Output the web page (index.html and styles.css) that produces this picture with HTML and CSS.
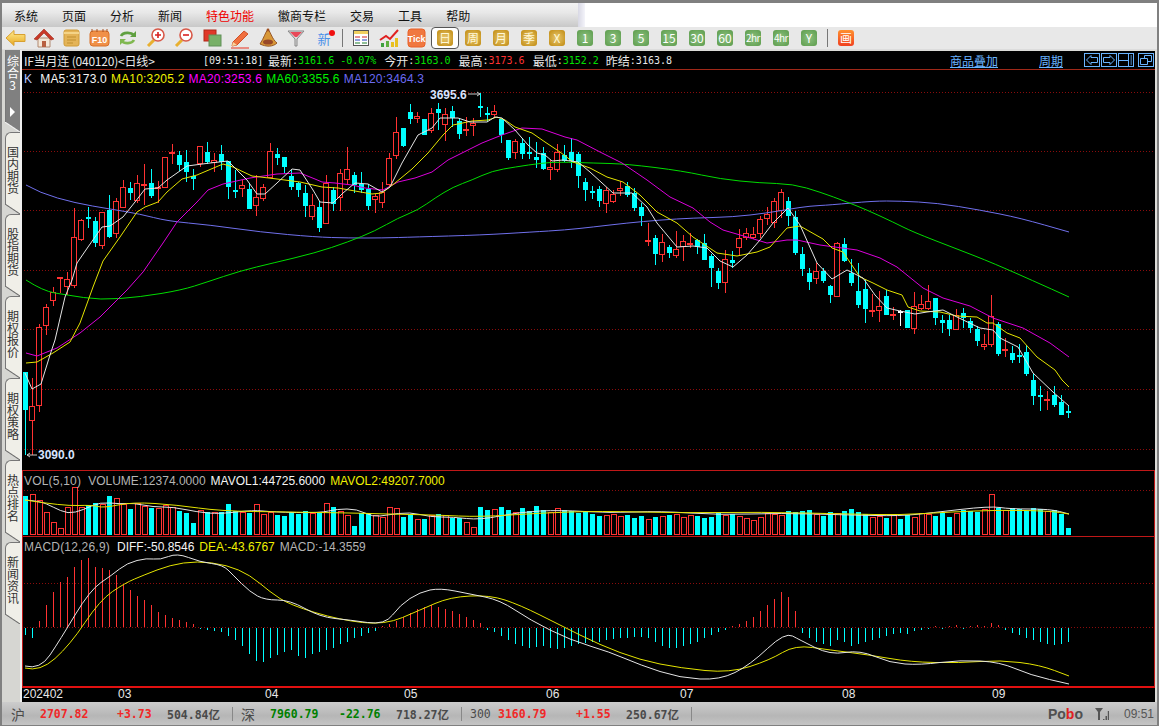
FILE: index.html
```html
<!DOCTYPE html>
<html lang="zh-CN">
<head>
    <meta charset="UTF-8">
    <title>IF当月连 日线</title>
    <link rel="stylesheet" href="styles.css">
</head>
<body>
<div class="window">
    <div class="menubar">
        <div class="menu">
            <span>系统</span><span>页面</span><span>分析</span><span>新闻</span>
            <span class="hot">特色功能</span><span>徽商专栏</span><span>交易</span><span>工具</span><span>帮助</span>
        </div>
        <div class="menu-gap"></div>
        <div class="menu-blank"></div>
    </div>

    <div class="toolbar">
        <span class="tool"><svg width="24" height="22" viewBox="0 0 24 22"><defs><linearGradient id="gold" x1="0" y1="0" x2="0" y2="1"><stop offset="0" stop-color="#ffec90"/><stop offset="1" stop-color="#e8a820"/></linearGradient></defs><path d="M2 11 10 3.500V7.500H21V14.500H10V18.500Z" fill="url(#gold)" stroke="#d8a030"/></svg></span>
        <span class="tool"><svg width="24" height="22" viewBox="0 0 24 22"><path d="M6 11H18V20H6Z" fill="#f4e8d8" stroke="#b08870"/><path d="M10 14H14V20H10Z" fill="#b86040"/><path d="M2 12 12 2 22 12 19 13 12 6 5 13Z" fill="#c83828" stroke="#a03020" stroke-width=".6"/></svg></span>
        <span class="tool"><svg width="22" height="22" viewBox="0 0 22 22"><rect x="3" y="3" width="15" height="16" rx="2" fill="#e4b458" stroke="#d09c38"/><path d="M3 5H18V7H3Z" fill="#f4d488"/><path d="M6 10H15M6 13H15M6 16H12" stroke="#c09030"/></svg></span>
        <span class="tool"><svg width="24" height="22" viewBox="0 0 24 22"><rect x="2" y="4" width="19" height="15" rx="3" fill="#f09048" stroke="#d87028"/><path d="M4 2V5M9 2V5M15 2V5M19 2V5" stroke="#a85020"/><text x="11.500" y="16" class="icon-text">F10</text></svg></span>
        <span class="tool"><svg width="22" height="22" viewBox="0 0 22 22" fill="none" stroke-width="2.600"><path d="M4 9C6 5 14 5 17 8" stroke="#60a040"/><path d="M17 13C15 17 7 17 5 14" stroke="#80b850"/><path d="M19 4V10H13Z" fill="#60a040" stroke="none"/><path d="M3 18V12H9Z" fill="#80b850" stroke="none"/></svg></span>
        <span class="tool"><svg width="22" height="22" viewBox="0 0 22 22" fill="none"><path d="M3 19 9 13" stroke="#e8b030" stroke-width="3"/><circle cx="13" cy="8" r="6" fill="#fff" stroke="#d85848" stroke-width="1.600"/><path d="M10 8H16M13 5V11" stroke="#d82020" stroke-width="1.600"/></svg></span>
        <span class="tool"><svg width="22" height="22" viewBox="0 0 22 22" fill="none"><path d="M3 19 9 13" stroke="#e8b030" stroke-width="3"/><circle cx="13" cy="8" r="6" fill="#fff" stroke="#d85848" stroke-width="1.600"/><path d="M10 8H16" stroke="#d82020" stroke-width="1.600"/></svg></span>
        <span class="tool"><svg width="22" height="22" viewBox="0 0 22 22"><rect x="3" y="3" width="12" height="11" fill="#e03828" stroke="#b02818"/><rect x="8" y="8" width="12" height="11" fill="#78b068" stroke="#609058"/></svg></span>
        <span class="tool"><svg width="22" height="22" viewBox="0 0 22 22"><path d="M4 15 15 4 19 7 8 18 3 19Z" fill="#f07040" stroke="#d05028"/><path d="M4 15 8 18 3 19Z" fill="#f8d8a0"/><path d="M2 21H20" stroke="#e85040" stroke-width="1.200"/></svg></span>
        <span class="tool"><svg width="22" height="22" viewBox="0 0 22 22"><path d="M11 2C8 6 7 11 3 17 9 20 16 20 20 16 15 12 14 6 11 2Z" fill="#d89838" stroke="#985828"/><ellipse cx="11" cy="15" rx="5" ry="2.600" fill="#984828"/><circle cx="11" cy="3" r="1.400" fill="#a05020"/></svg></span>
        <span class="tool"><svg width="22" height="22" viewBox="0 0 22 22"><path d="M3 4H19L12 12V19H10V12Z" fill="#dcdcdc" stroke="#888"/><path d="M5 5H17L12 10H10Z" fill="#e84858"/></svg></span>
        <span class="tool tool-new">新<i class="new-dot"></i></span>
        <span class="tool-sep"></span>
        <span class="tool"><svg width="22" height="22" viewBox="0 0 22 22"><rect x="3.500" y="3.500" width="15" height="15" fill="#fff" stroke="#555"/><path d="M4 4H18V7H4Z" fill="#f0d060"/><path d="M5 10H10M12 10H17" stroke="#d02020"/><path d="M5 13H10M12 13H17" stroke="#2040c0"/><path d="M5 16H10M12 16H17" stroke="#208030"/></svg></span>
        <span class="tool"><svg width="22" height="22" viewBox="0 0 22 22"><path d="M2 13 8 9 12 12 20 3" fill="none" stroke="#e02020" stroke-width="2"/><rect x="3" y="16" width="3" height="4" fill="#40a040"/><rect x="8" y="14" width="3" height="6" fill="#60b040"/><rect x="13" y="15" width="3" height="5" fill="#e8c020"/><rect x="17" y="11" width="3" height="9" fill="#e8c020"/></svg></span>
        <span class="tool"><svg width="24" height="22" viewBox="0 0 24 22"><rect x="3" y="2" width="17" height="18" rx="3" fill="#f07840" stroke="#e86028"/><text x="11.500" y="15" class="icon-text">Tick</text></svg></span>
        <span class="tool tool-active"><b class="key gold">日</b></span>
        <span class="tool"><b class="key gold">周</b></span>
        <span class="tool"><b class="key gold">月</b></span>
        <span class="tool"><b class="key gold">季</b></span>
        <span class="tool"><b class="key gold">X</b></span>
        <span class="tool"><b class="key green">1</b></span>
        <span class="tool"><b class="key green">3</b></span>
        <span class="tool"><b class="key green">5</b></span>
        <span class="tool"><b class="key green">15</b></span>
        <span class="tool"><b class="key green">30</b></span>
        <span class="tool"><b class="key green">60</b></span>
        <span class="tool"><b class="key green narrow">2hr</b></span>
        <span class="tool"><b class="key green narrow">4hr</b></span>
        <span class="tool"><b class="key green">Y</b></span>
        <span class="tool-sep"></span>
        <span class="tool"><b class="key orange">画</b></span>
    </div>

    <div class="workspace">
        <div class="side-tabs">
            <div class="tab tab-active"><span class="tab-text">综合</span><span class="tab-num">3</span><span class="tab-arrow"></span></div>
            <div class="tab"><span class="tab-text">国内期货</span></div>
            <div class="tab"><span class="tab-text">股指期货</span></div>
            <div class="tab"><span class="tab-text">期权报价</span></div>
            <div class="tab"><span class="tab-text">期权策略</span></div>
            <div class="tab"><span class="tab-text">热点排名</span></div>
            <div class="tab"><span class="tab-text">新闻资讯</span></div>
        </div>

        <div class="terminal">
            <div class="quote-row">
                <span class="q-title">IF当月连 (040120)&lt;日线&gt;</span>
                <span class="q-time">[09:51:18]</span>
                <span class="q-item q-first">最新</span><span class="q-val c-green">3161.6</span>
                <span class="q-plain c-green">-0.07%</span>
                <span class="q-item">今开</span><span class="q-val c-green">3163.0</span>
                <span class="q-item">最高</span><span class="q-val c-red">3173.6</span>
                <span class="q-item">最低</span><span class="q-val c-green">3152.2</span>
                <span class="q-item q-last">昨结</span><span class="q-val">3163.8</span>
                <span class="q-link q-link-goods">商品叠加</span>
                <span class="q-link q-link-period">周期</span>
                <span class="q-btn"><svg width="16" height="14" viewBox="0 0 16 14" fill="none" stroke="#6ab4ff"><path d="M7 2.500 2.500 7 7 11.500V9.500H13.500V4.500H7Z"/></svg></span>
                <span class="q-btn"><svg width="16" height="14" viewBox="0 0 16 14" fill="none" stroke="#6ab4ff"><path d="M9 2.500 13.500 7 9 11.500V9.500H2.500V4.500H9Z"/></svg></span>
                <span class="q-btn"><svg width="16" height="14" viewBox="0 0 16 14" fill="none" stroke="#6ab4ff"><path d="M1 7.500H10M10.500 1V13M12.500 3H14M12.500 5H14M12.500 7H14M12.500 9H14M12.500 11H14"/></svg></span>
                <span class="q-btn q-btn-last"><svg width="16" height="14" viewBox="0 0 16 14" fill="none" stroke="#6ab4ff"><path d="M6.500 5.500V2.500H13.500V8.500H9.500M2.500 5.500H9.500V11.500H2.500Z"/></svg></span>
            </div>

            <div class="panel panel-price" id="price-panel">
                <div class="legend">
                    <span class="c-kline">K</span><span class="c-white legend-ma5">MA5:3173.0</span><span class="c-yellow">MA10:3205.2</span><span class="c-magenta">MA20:3253.6</span><span class="c-lime">MA60:3355.6</span><span class="c-blue">MA120:3464.3</span>
                </div>
                <span class="peak-label peak-high">3695.6</span>
                <span class="peak-label peak-low">3090.0</span>
            </div>
            <div class="panel panel-vol" id="vol-panel">
                <div class="legend legend-vol">
                    <span class="c-grey legend-name">VOL(5,10)</span><span class="c-grey">VOLUME:12374.0000</span><span class="c-white">MAVOL1:44725.6000</span><span class="c-yellow">MAVOL2:49207.7000</span>
                </div>
            </div>
            <div class="panel panel-macd" id="macd-panel">
                <div class="legend legend-macd">
                    <span class="c-grey legend-name">MACD(12,26,9)</span><span class="c-white">DIFF:-50.8546</span><span class="c-yellow">DEA:-43.6767</span><span class="c-grey">MACD:-14.3559</span>
                </div>
            </div>
            <div class="date-axis" id="date-axis"></div>
        </div>
    </div>

    <div class="statusbar">
        <span class="st-name st-sh">沪</span>
        <span class="st-num st-price c-up">2707.82</span>
        <span class="st-num st-chg c-up">+3.73</span>
        <span class="st-num st-amt">504.84亿</span>
        <span class="st-sep"></span>
        <span class="st-name">深</span>
        <span class="st-num st-price-sz c-down">7960.79</span>
        <span class="st-num st-chg-sz c-down">-22.76</span>
        <span class="st-num st-amt">718.27亿</span>
        <span class="st-sep"></span>
        <span class="st-num st-300">300</span>
        <span class="st-num st-price-300 c-up">3160.79</span>
        <span class="st-num st-chg c-up">+1.55</span>
        <span class="st-num st-amt">250.67亿</span>
        <span class="st-sep"></span>
        <span class="st-logo">Po<em>b</em>o</span>
        <svg class="st-signal" width="14" height="14" viewBox="0 0 14 14"><path d="M0 1H8L5 5V13H3V5Z" fill="#555"/><path d="M8 12H9.500V13H8ZM10.500 9H12V13H10.500ZM12.800 4H14V13H12.800Z" fill="#555"/></svg>
        <span class="st-clock">09:51</span>
    </div>
</div>
<script src="chart.js"></script>
</body>
</html>
```

FILE: styles.css
```css
* {
    box-sizing: border-box;
}
body {
    margin: 0;
    background-color: #808080;
    font-family: "Liberation Sans", "Noto Sans CJK SC", sans-serif;
    font-size: 12px;
}
.window {
    display: flex;
    flex-direction: column;
    width: 1159px;
    height: 726px;
    padding: 3px 2px 1px 2px;
    overflow: hidden;
}

/* menu */
.menubar {
    display: flex;
    height: 24px;
    flex: none;
}
.menu {
    display: flex;
    align-items: center;
    gap: 24px;
    width: 576px;
    padding-left: 12px;
    background: linear-gradient(#f2f2f2, #e8e8e8 40%, #c8c8c8);
    color: #111;
    font-family: "Noto Sans CJK SC", sans-serif;
}
.menu .hot {
    color: #f00000;
}
.menu-gap {
    width: 7px;
    background: linear-gradient(to right, #d8d8e4, #f4f4fa);
}
.menu-blank {
    flex: 1;
    background-color: #fff;
}

/* toolbar */
.toolbar {
    display: flex;
    align-items: center;
    flex: none;
    height: 23px;
    background-color: #e8e8e8;
    border-bottom: 1px solid #dcdcdc;
}
.tool {
    display: flex;
    align-items: center;
    justify-content: center;
    flex: none;
    width: 28px;
    height: 22px;
}
.tool-new {
    position: relative;
    color: #4a90e8;
    font-family: "Noto Sans CJK SC", sans-serif;
    font-size: 13px;
}
.new-dot {
    position: absolute;
    top: 3px;
    right: 3px;
    width: 6px;
    height: 6px;
    border-radius: 50%;
    background-color: #f01010;
}
.tool-sep {
    flex: none;
    width: 1px;
    height: 18px;
    margin: 0 4px 0 4px;
    background-color: #777;
}
.tool-active {
    border: 1px solid #555;
    border-radius: 4px;
    background-color: #fff;
}
.icon-text {
    fill: #fff;
    font-size: 9px;
    font-weight: bold;
    text-anchor: middle;
}
.key {
    display: flex;
    align-items: center;
    justify-content: center;
    width: 16px;
    height: 16px;
    border-radius: 3px;
    color: #fff;
    font-family: "Noto Sans CJK SC", sans-serif;
    font-size: 12px;
    font-weight: normal;
    line-height: 1;
}
.key.narrow {
    font-size: 10px;
    letter-spacing: -.5px;
}
.key.gold {
    background: radial-gradient(#e8c870, #c08a10);
    color: #fff8d8;
}
.key.green {
    background: radial-gradient(#8cc080, #5c9c4c);
}
.key.orange {
    background: linear-gradient(#ff9030, #f04020);
}

/* workspace */
.workspace {
    display: flex;
    flex: 1;
    min-height: 0;
    padding: 1px 2px 0 0;
    background-color: #dcdcd8;
}
.side-tabs {
    flex: none;
    width: 20px;
    margin-top: -1px;
    padding-left: 3px;
    background-color: #d6d6d2;
    border-right: 2px solid #efefef;
}
.tab {
    position: relative;
    display: flex;
    flex-direction: column;
    align-items: center;
    height: 82px;
    padding: 13px 1px 0 0;
    background-color: #f0efe8;
    border: 1px solid #777;
    border-width: 1px 0 0 1px;
    border-top-left-radius: 6px;
    color: #333;
    font-family: "Noto Sans CJK SC", sans-serif;
}
.tab::after {
    content: "";
    position: absolute;
    left: -1px;
    right: 0;
    bottom: 0;
    height: 10px;
    background: linear-gradient(to top right, #d6d6d2 calc(50% - 1px), #666 50%, #f0efe8 calc(50% + 1px));
}
.tab-active {
    height: 82px;
    padding-top: 5px;
    background-color: #808080;
    border-top: 0;
    border-radius: 0;
    color: #fff;
}
.tab-active::after {
    background: linear-gradient(to top right, #d6d6d2 calc(50% - 1px), #f4f4f4 50%, #808080 calc(50% + 1px));
}
.tab-text {
    writing-mode: vertical-rl;
    text-orientation: upright;
    line-height: 14px;
}
.tab-num {
    line-height: 12px;
}
.tab-arrow {
    margin-top: 16px;
    border-left: 5px solid #fff;
    border-top: 5px solid transparent;
    border-bottom: 5px solid transparent;
}

/* terminal */
.terminal {
    display: flex;
    flex-direction: column;
    flex: 1;
    min-width: 0;
    background-color: #000;
    color: #e8e8e8;
}
.quote-row {
    display: flex;
    align-items: center;
    flex: none;
    height: 19px;
    padding-left: 2px;
    border-bottom: 1px solid #a02818;
    font-family: "DejaVu Sans Mono", "Noto Sans CJK SC", monospace;
    font-size: 10px;
}
.q-title {
    width: 179px;
    font-family: "Noto Sans CJK SC", sans-serif;
    font-size: 12px;
    letter-spacing: -.2px;
}
.q-time {
    width: 65px;
}
.q-item {
    margin-left: 8px;
    font-family: "Noto Sans CJK SC", sans-serif;
    font-size: 12px;
}
.q-first {
    margin-left: 0;
}
.q-last {
    margin-left: 7px;
}
.q-val::before {
    content: ":";
    color: #e8e8e8;
}
.q-plain {
    margin-left: 6px;
}
.q-link {
    color: #6ab4ff;
    font-family: "Noto Sans CJK SC", sans-serif;
    font-size: 12px;
    text-decoration: underline;
}
.q-link-goods {
    margin-left: 278px;
}
.q-link-period {
    margin-left: 41px;
    margin-right: 21px;
}
.q-btn {
    display: flex;
    width: 16px;
    height: 14px;
    margin-right: 1px;
    outline: 1px solid #6ab4ff;
    outline-offset: -1px;
}
.q-btn-last {
    margin-left: 3px;
    margin-right: 0;
}
.c-green {
    color: #00e000;
}
.c-red {
    color: #ff3232;
}
.c-kline {
    color: #b8c8ff;
}
.c-white {
    color: #f4f4f4;
}
.c-yellow {
    color: #f0f000;
}
.c-magenta {
    color: #ff00ff;
}
.c-lime {
    color: #00f000;
}
.c-blue {
    color: #6a6af0;
}
.c-grey {
    color: #b4b4b4;
}

/* chart panels */
.panel {
    position: relative;
    flex: none;
    border-bottom: 1px solid #c01818;
}
.panel svg {
    display: block;
}
.panel-price {
    height: 401px;
}
.panel-vol {
    height: 66px;
    border-left: 1px solid #c01818;
    border-right: 1px solid #c01818;
}
.panel-macd {
    height: 151px;
    border-left: 1px solid #c01818;
    border-right: 1px solid #c01818;
    border-bottom: 2px solid #e01010;
}
.legend {
    position: absolute;
    top: 2px;
    left: 2px;
    display: flex;
    gap: 4px;
    white-space: nowrap;
    line-height: 14px;
    letter-spacing: .2px;
}
.legend-ma5 {
    margin-left: 4px;
}
.legend-vol, .legend-macd {
    top: 3px;
    left: 1px;
    letter-spacing: 0;
}
.legend-vol {
    gap: 5px;
}
.legend-macd {
    gap: 5px;
}
.legend-name {
    margin-right: 2px;
    letter-spacing: .2px;
}
.peak-label {
    position: absolute;
    color: #d8e4ff;
    font-weight: bold;
    line-height: 14px;
}
.peak-high {
    top: 18px;
    left: 408px;
}
.peak-low {
    top: 378px;
    left: 16px;
}
.date-axis {
    position: relative;
    flex: none;
    height: 14px;
    line-height: 12px;
    color: #e8e8e8;
}
.date-axis span {
    position: absolute;
    top: 0;
}

/* status bar */
.statusbar {
    display: flex;
    align-items: center;
    flex: none;
    height: 23px;
    padding-left: 9px;
    background: linear-gradient(#cccccc, #b6b6b6 60%, #c4c4c4);
    color: #4a4a4a;
    font-family: "DejaVu Sans Mono", "Noto Sans CJK SC", monospace;
    font-size: 12px;
    font-weight: bold;
}
.st-name {
    width: 16px;
    font-family: "Noto Sans CJK SC", sans-serif;
    font-size: 14px;
    font-weight: normal;
}
.st-num {
    font-size: 11.500px;
}
.st-price {
    width: 77px;
    margin-left: 13px;
}
.st-chg {
    width: 50px;
}
.st-amt {
    width: 56px;
}
.st-price-sz {
    width: 69px;
    margin-left: 13px;
}
.st-chg-sz {
    width: 57px;
}
.st-300 {
    width: 28px;
    font-weight: normal;
}
.st-price-300 {
    width: 78px;
}
.st-sep {
    width: 1px;
    height: 14px;
    margin: 0 8px 0 9px;
    background-color: #888;
}
.c-up {
    color: #f02828;
}
.c-down {
    color: #008000;
}
.st-logo {
    margin-left: auto;
    color: #505050;
    font-family: "Liberation Sans", sans-serif;
    font-size: 14px;
}
.st-logo em {
    color: #e02020;
    font-style: normal;
}
.st-signal {
    margin-left: 12px;
}
.st-clock {
    margin-left: 15px;
    margin-right: 3px;
    color: #555;
    font-family: "Liberation Sans", sans-serif;
    font-weight: normal;
}
```

FILE: chart.js
```js
// all coordinates below are page pixels, read straight off the terminal
const SVG_NS = "http://www.w3.org/2000/svg";
const RED = "#ff3232";
const CYAN = "#00ffff";

// type, high, body top, body bottom, low
const candles = [
    "c372,372,410,455", "r378,406,421,455", "r324,327,406,412", "r304,307,326,335", "r287,292,301,306",
    "r277,277,278,293", "r272,279,287,295", "r208,237,286,288", "r219,220,240,241", "c207,217,219,228",
    "c217,221,243,247", "r212,212,246,249", "c195,210,237,238", "r198,201,234,238", "r180,187,208,208",
    "c182,188,193,200", "r175,183,201,203", "r164,184,186,205", "c169,183,196,198", "r181,187,189,203",
    "r157,157,188,188", "r144,152,154,164", "c151,155,165,171", "c150,162,172,182", "c169,176,179,190",
    "r146,146,164,167", "c142,152,162,164", "r153,160,163,172", "c145,154,162,170", "c161,161,187,199",
    "c170,190,192,198", "r180,185,189,197", "c183,189,209,209", "r175,197,206,216", "r184,187,199,201",
    "r143,151,178,178", "c148,154,158,165", "c157,157,167,173", "c170,176,187,190", "c182,183,190,197",
    "c185,193,206,217", "r194,205,217,220", "c201,207,228,232", "r175,183,224,224", "c187,190,204,211",
    "r169,173,198,211", "r147,169,180,184", "c172,175,185,193", "c172,184,190,193", "c184,189,206,210",
    "r194,196,200,213", "r182,192,203,208", "r153,158,185,186", "r117,132,156,159", "c128,128,146,147",
    "c104,112,119,124", "r112,116,119,123", "c119,119,135,135", "r108,113,131,133", "c103,109,113,130",
    "r108,114,125,141", "c106,111,118,127", "c118,121,134,139", "r117,129,130,136", "r118,123,126,136",
    "c93,106,106,117", "c107,113,115,122", "r105,111,115,118", "c119,119,135,143", "c140,140,158,160",
    "r139,141,153,159", "c138,143,154,159", "c137,152,153,159", "c142,157,160,168", "c147,153,169,170",
    "r160,167,170,180", "r144,152,170,172", "c145,155,161,162", "c138,152,161,168", "c152,154,176,188",
    "c178,182,190,201", "c186,191,193,199", "c186,189,201,207", "r187,190,204,213", "r190,194,202,203",
    "r181,188,191,196", "c182,186,195,197", "c188,193,208,211", "c203,207,216,226", "r223,240,242,246",
    "c235,238,254,265", "r234,242,255,262", "c245,247,253,258", "r231,249,256,258", "r235,241,247,261",
    "r233,243,245,248", "c239,240,247,254", "c234,243,260,260", "c254,256,268,287", "c268,271,283,289",
    "r250,259,283,293", "c251,260,263,268", "r229,238,248,256", "r228,233,238,240", "r227,234,238,239",
    "r216,219,234,238", "r207,214,219,225", "r198,201,223,228", "r189,192,211,218", "c197,201,216,226",
    "c211,217,253,255", "c247,254,269,276", "c268,273,282,290", "r263,271,279,284", "c268,271,281,283",
    "c285,286,295,303", "r242,243,297,297", "c238,244,261,262", "c259,273,283,286", "c263,291,305,308",
    "c280,289,309,323", "r294,310,312,317", "r291,306,311,322", "c290,296,315,315", "r307,314,315,320",
    "w310,311,312,326", "c310,310,328,328", "r292,306,329,334", "r295,304,309,310", "r285,301,309,310",
    "c298,298,318,325", "c315,320,323,333", "c315,320,329,336", "r309,315,330,330", "c308,313,318,328",
    "c318,321,328,333", "c326,329,341,346", "r334,344,347,350", "r295,316,345,347", "c322,324,354,356",
    "r338,349,351,357", "c346,353,360,363", "c344,355,357,363", "c345,352,374,376", "c374,380,396,405",
    "c386,395,397,411", "r391,399,401,410", "c386,395,405,407", "c395,402,415,415", "c405,411,412,418"
];

const ma5 = "25,373 32,389 41,384 50,355 55,340 65,297 72,280 77,263 88,247 102,227 110,226 123,217 135,202 145,189 158,188 167,180 187,166 210,163 228,161 247,180 257,194 265,194 277,183 292,169 300,170 313,190 320,202 333,203 343,193 355,183 368,184 382,192 390,187 402,163 418,135 432,128 440,118 458,118 470,122 487,122 495,117 502,118 515,130 528,145 537,153 545,155 552,161 563,160 578,162 590,172 613,193 632,193 647,207 657,223 677,247 693,246 707,248 720,261 733,267 747,255 760,240 773,223 788,208 800,225 817,263 832,279 847,270 863,278 875,295 887,308 900,311 915,314 927,312 943,310 957,317 980,328 993,330 1000,338 1018,347 1033,373 1053,392 1069,406";
const ma10 = "26,363 37,362 53,353 70,342 80,323 93,287 103,261 120,237 137,212 145,207 158,202 167,192 182,179 197,175 223,164 233,167 252,176 277,179 300,182 322,187 338,188 355,191 372,194 382,193 395,183 412,169 428,153 443,135 453,125 472,121 488,120 497,117 505,120 515,127 532,133 545,142 560,152 573,162 590,168 607,177 623,182 640,195 657,212 677,223 693,237 717,253 737,256 757,252 770,247 787,228 800,226 823,239 832,248 843,252 860,277 873,283 887,290 902,295 908,307 920,311 940,312 957,316 977,317 987,323 993,323 1007,333 1020,338 1037,357 1055,370 1062,380 1069,387";
const ma20 = "26,353 37,356 57,348 80,333 100,317 127,290 143,272 163,243 177,222 197,202 208,190 223,184 250,178 277,174 300,173 315,179 322,182 335,183 352,185 365,188 383,190 398,182 415,178 432,172 448,160 462,153 482,143 502,135 522,128 542,129 565,137 577,140 600,152 622,163 647,180 670,197 693,208 710,222 723,230 747,237 767,243 787,240 797,240 820,245 857,250 880,258 897,267 923,288 943,298 970,306 993,318 1023,328 1050,343 1069,357";
const ma60 = "26,280 43,291 67,295 100,300 140,297 182,290 207,282 240,271 273,263 315,253 348,242 375,231 398,218 418,210 435,198 453,187 472,180 492,171 515,167 542,163 560,162 593,163 627,164 683,171 720,179 760,183 793,184 820,192 847,202 867,210 893,222 913,232 957,249 993,263 1047,287 1069,297";
const ma120 = "26,185 40,193 75,203 110,209 140,214 167,221 210,225 260,232 315,237 348,238 382,238 415,237 482,235 532,232 565,230 593,227 627,223 660,220 693,218 733,217 767,213 790,209 810,206 830,205 873,201 900,201 937,203 980,210 1020,218 1069,232";

const volTops = [
    496, 494, 500, 512, 522, 528, 507, 487, 507, 505, 503, 504, 496, 498, 504, 509, 503, 506, 508, 508,
    505, 507, 511, 513, 523, 510, 512, 512, 512, 504, 511, 512, 513, 504, 514, 512, 515, 516, 512, 514,
    511, 513, 513, 503, 507, 511, 515, 526, 513, 513, 515, 517, 507, 508, 517, 515, 519, 519, 515, 514,
    515, 518, 518, 522, 527, 507,
    510, 509, 507, 510, 512, 508, 511, 506, 510, 512,
    508, 510, 511, 513, 512, 514, 516, 515, 514, 516,
    515, 518, 516, 519, 517, 516, 515, 514, 517, 515,
    516, 518, 517, 513, 515, 514, 516, 518, 520, 517,
    513, 514, 515, 511, 512, 511, 510, 514, 516, 512,
    513, 511, 509, 512, 514, 517, 516, 518, 515, 519,
    515, 517, 513, 514, 516, 513, 517, 513, 510, 511,
    512, 509, 494, 508, 510, 508, 509, 511, 508, 509,
    511, 510, 514, 528
];
const volMa5 = "25,500 40,501 53,507 68,514 83,510 100,502 120,504 133,503 153,507 173,507 197,512 220,514 253,510 273,512 320,513 337,509 357,509 373,517 387,515 410,512 430,517 453,517 480,520 520,512 560,510 610,513 660,511 720,515 780,513 850,515 900,516 930,513 990,506 1010,509 1050,509 1069,514";
const volMa10 = "25,500 63,506 93,505 103,508 133,502 177,505 220,511 287,512 353,513 387,514 437,515 480,517 540,513 600,511 680,513 760,512 850,514 900,515 950,512 1000,510 1050,511 1069,514";

const macdBars = [
    -7, -10, 6, 22, 35, 45, 50, 60, 67, 69, 60, 59, 57, 52, 42, 37, 31, 27, 22, 15, 12, 9, 7, 5, 3,
    -1, -2, -3, -4, -8, -12, -18, -26, -33, -34, -30, -27, -24,
    -22, -28, -30, -26, -24, -22, -20, -16, -14, -10, -8, -5, -3,
    1, 3, 6, 10, 14, 18, 20, 22, 20, 18, 16, 13, 10, 7, 4,
    -2, -4, -8, -12, -16, -18, -20, -19, -18, -20, -21, -20, -18, -16, -15,
    -14, -14, -12, -11, -10, -10, -9, -9, -10, -14, -18, -20, -20, -18, -16,
    -14, -10, -7, -4, -2, 1, 3, 6, 10,
    16, 22, 28, 35, 30, 16,
    -5, -10, -14, -16, -18, -12, -14, -18, -16, -14, -12, -10, -8, -6, -5,
    -6, -3, -2, -1, 1, -1, 1, 2, -1, 1, 2, 1, 4, 2, -2,
    -5, -7, -10, -12, -14, -16, -17, -16, -14
];
const diff = "25,666 40,670 60,640 90,590 112,575 127,563 147,558 160,560 177,553 200,562 223,565 233,575 250,592 265,600 290,600 320,617 350,620 385,625 400,605 420,592 440,588 470,594 500,600 530,620 570,640 610,652 640,665 680,678 720,680 750,665 785,632 800,640 830,655 860,650 890,663 920,665 960,660 1000,662 1030,675 1069,684";
const dea = "25,668 40,672 70,645 100,600 125,583 144,575 170,565 197,561 227,565 250,575 270,592 290,605 340,620 385,625 420,610 450,597 490,595 520,605 560,625 600,645 640,660 680,668 730,673 770,660 795,645 830,650 870,655 910,662 960,663 1000,660 1040,665 1069,676";

const dates = [["202402", 23], ["03", 118], ["04", 265], ["05", 404], ["06", 546], ["07", 680], ["08", 842], ["09", 992]];

function el(name, attrs) {
    const node = document.createElementNS(SVG_NS, name);
    for (const key in attrs) node.setAttribute(key, attrs[key]);
    return node;
}

function makeSvg(panelId, x, y, w, h) {
    const svg = el("svg", { width: w, height: h, viewBox: x + " " + y + " " + w + " " + h });
    document.getElementById(panelId).prepend(svg);
    return svg;
}

function rect(svg, x, y, w, h, fill, stroke) {
    svg.appendChild(el("rect", {
        x: x, y: y, width: w, height: h,
        fill: fill, stroke: stroke || "none", "shape-rendering": "crispEdges"
    }));
}

function line(svg, points, color) {
    svg.appendChild(el("polyline", { points: points, fill: "none", stroke: color, "stroke-width": 1 }));
}

// rounds the corners of a coarse polyline, for the slow averages
function curve(svg, points, color) {
    const pts = points.split(" ").map(p => p.split(",").map(Number));
    let d = "M" + pts[0].join(" ");
    for (let i = 1; i < pts.length - 1; i++) {
        const midX = (pts[i][0] + pts[i + 1][0]) / 2;
        const midY = (pts[i][1] + pts[i + 1][1]) / 2;
        d += " Q" + pts[i].join(" ") + " " + midX + " " + midY;
    }
    d += " L" + pts[pts.length - 1].join(" ");
    svg.appendChild(el("path", { d: d, fill: "none", stroke: color, "stroke-width": 1 }));
}

function grid(svg, ys) {
    ys.forEach(y => {
        svg.appendChild(el("line", {
            x1: 24, x2: 1153, y1: y + 0.5, y2: y + 0.5,
            stroke: "#8a0c0c", "stroke-dasharray": "1 2", "shape-rendering": "crispEdges"
        }));
    });
}

function drawPrice() {
    const svg = makeSvg("price-panel", 22, 70, 1133, 400);
    grid(svg, [92, 151, 210, 270, 329, 389, 449]);

    candles.forEach((c, i) => {
        const kind = c[0];
        const [high, top, bottom, low] = c.slice(1).split(",").map(Number);
        const cx = 25 + 7 * i;
        const color = kind === "r" ? RED : kind === "w" ? "#fff" : CYAN;
        rect(svg, cx, high, 1, low - high, color);
        if (kind === "r") {
            rect(svg, cx - 2.5, top + 0.5, 5, Math.max(bottom - top - 1, 1), "#000", color);
        } else if (bottom - top > 2) {
            rect(svg, cx - 2, top, 5, bottom - top, color);
        } else {
            rect(svg, cx - 2, top, 5, 2, color);
        }
    });

    curve(svg, ma120, "#7070ec");
    curve(svg, ma60, "#00dc00");
    line(svg, ma20, "#dc00dc");
    line(svg, ma10, "#e4e400");
    line(svg, ma5, "#e4e4e4");

    // arrows next to the high and low labels
    const arrow = "#c8c8c8";
    line(svg, "468,94 480,94", arrow);
    line(svg, "477,92 480,94 477,96", arrow);
    line(svg, "27,455 37,455", arrow);
    line(svg, "30,453 27,455 30,457", arrow);
}

function drawVolume() {
    const svg = makeSvg("vol-panel", 23, 471, 1131, 65);
    grid(svg, [490]);
    volTops.forEach((top, i) => {
        const x = 23 + 7 * i;
        if (candles[i][0] === "r") {
            rect(svg, x + 0.5, top + 0.5, 5, 534 - top, "#000", RED);
        } else {
            rect(svg, x, top, 5, 535 - top, CYAN);
        }
    });
    curve(svg, volMa5, "#e4e4e4");
    curve(svg, volMa10, "#e4e400");
}

function drawMacd() {
    const svg = makeSvg("macd-panel", 23, 537, 1131, 149);
    grid(svg, [583, 627]);
    macdBars.forEach((v, i) => {
        const x = 25 + 7 * i;
        if (v > 0) {
            rect(svg, x, 627 - v, 1, v, RED);
        } else {
            rect(svg, x, 628, 1, -v, CYAN);
        }
    });
    curve(svg, dea, "#e4e400");
    curve(svg, diff, "#e4e4e4");
}

function drawDates() {
    const axis = document.getElementById("date-axis");
    dates.forEach(d => {
        const label = document.createElement("span");
        label.textContent = d[0];
        label.style.left = (d[1] - 22) + "px";
        axis.appendChild(label);
    });
}

drawPrice();
drawVolume();
drawMacd();
drawDates();
```
